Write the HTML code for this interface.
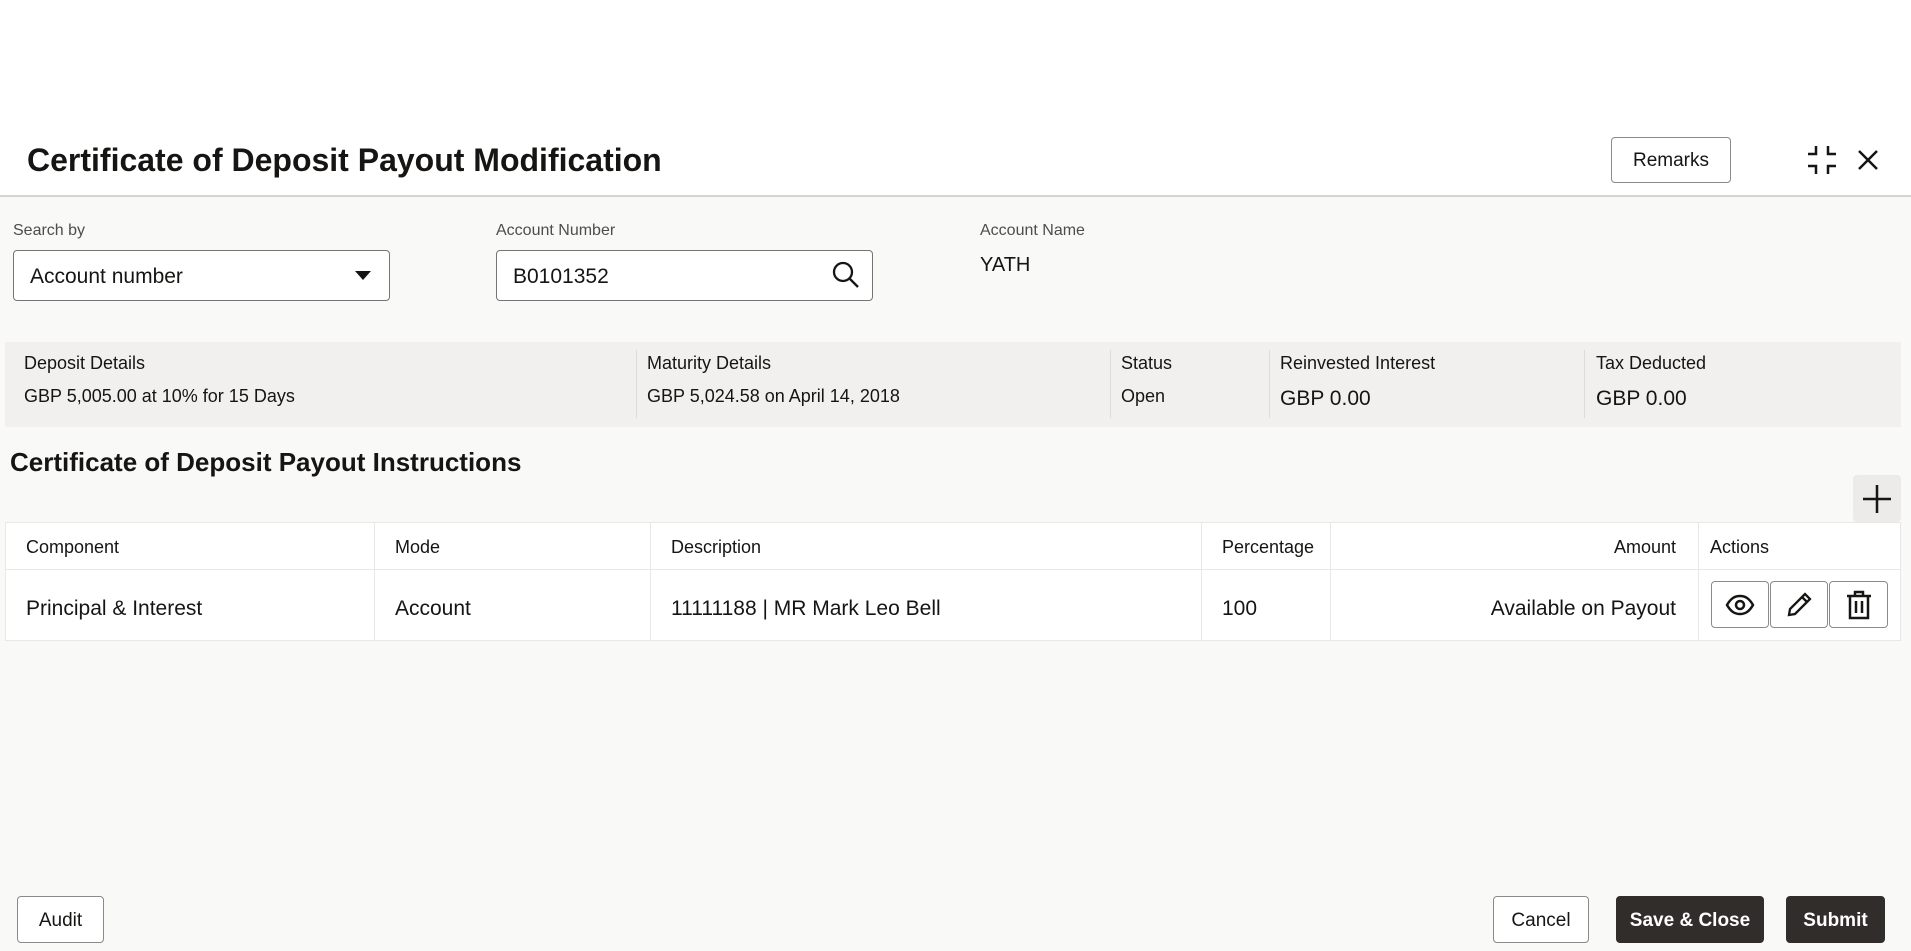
<!DOCTYPE html>
<html><head><meta charset="utf-8"><style>
*{box-sizing:border-box;margin:0;padding:0}
body{width:1911px;height:951px;overflow:hidden;background:#fff;font-family:"Liberation Sans",sans-serif;color:#161513;position:relative}
.abs{position:absolute}
.bg{left:0;top:196px;width:1911px;height:755px;background:#f9f9f8}
.btn{position:absolute;border:1px solid #8a8a8a;border-radius:4px;background:#fff;display:flex;align-items:center;justify-content:center;font-size:19px;color:#161513;padding-top:2px}
.dark{background:#312d2a;color:#fff;border-color:#312d2a;font-weight:bold}
.lbl{position:absolute;font-size:16px;color:#4f4d4b}
.inp{position:absolute;border:1px solid #757575;border-radius:4px;background:#fff;font-size:21px;padding-left:16px;padding-top:2px;display:flex;align-items:center}
.band{left:5px;top:342px;width:1896px;height:85px;background:#f1f0ee}
.bl{position:absolute;font-size:18px;color:#161513}
.bv{position:absolute;font-size:18px}
.vd{position:absolute;top:350px;height:68px;width:1px;background:#dcdbd9}
table{position:absolute;left:5px;top:522px;width:1896px;border-collapse:collapse;background:#fff;border:1px solid #e2e1df}
td{border:1px solid #e9e8e6;font-size:21px;padding:2px 0 0 20px}
tr.h td{height:47px;font-size:18px}
tr.r td{height:71px;padding-top:8px}
</style></head><body>
<div class="abs bg"></div>
<div class="abs" style="left:27px;top:142px;font-size:32px;font-weight:bold">Certificate of Deposit Payout Modification</div>
<div class="btn" style="left:1611px;top:137px;width:120px;height:46px">Remarks</div>
<svg class="abs" style="left:1806px;top:144px" width="32" height="32" viewBox="0 0 32 32" fill="none" stroke="#161513" stroke-width="2.5"><path d="M10 2v8H2M22 2v8h8M10 30v-8H2M22 30v-8h8"/></svg>
<svg class="abs" style="left:1857px;top:149px" width="22" height="22" viewBox="0 0 22 22" stroke="#161513" stroke-width="2.5"><path d="M2 2l18 18M20 2L2 20"/></svg>
<div class="abs" style="left:0;top:195px;width:1911px;height:2px;background:#d5d4d2"></div>

<div class="lbl" style="left:13px;top:222px">Search by</div>
<div class="inp" style="left:13px;top:250px;width:377px;height:51px">Account number</div>
<svg class="abs" style="left:355px;top:271px" width="16" height="10"><path d="M0 0h16L8 9z" fill="#161513"/></svg>
<div class="lbl" style="left:496px;top:222px">Account Number</div>
<div class="inp" style="left:496px;top:250px;width:377px;height:51px">B0101352</div>
<svg class="abs" style="left:832px;top:261px" width="28" height="28" viewBox="0 0 28 28" fill="none" stroke="#161513" stroke-width="2.3"><circle cx="11" cy="11" r="9"/><path d="M18 18l8 8"/></svg>
<div class="lbl" style="left:980px;top:222px">Account Name</div>
<div class="abs" style="left:980px;top:254px;font-size:20px">YATH</div>

<div class="abs band"></div>
<div class="vd" style="left:636px"></div><div class="vd" style="left:1110px"></div><div class="vd" style="left:1269px"></div><div class="vd" style="left:1584px"></div>
<div class="bl" style="left:24px;top:353px">Deposit Details</div><div class="bv" style="left:24px;top:386px">GBP 5,005.00 at 10% for 15 Days</div>
<div class="bl" style="left:647px;top:353px">Maturity Details</div><div class="bv" style="left:647px;top:386px">GBP 5,024.58 on April 14, 2018</div>
<div class="bl" style="left:1121px;top:353px">Status</div><div class="bv" style="left:1121px;top:386px">Open</div>
<div class="bl" style="left:1280px;top:353px">Reinvested Interest</div><div class="bv" style="left:1280px;top:387px;font-size:21px">GBP 0.00</div>
<div class="bl" style="left:1596px;top:353px">Tax Deducted</div><div class="bv" style="left:1596px;top:387px;font-size:21px">GBP 0.00</div>

<div class="abs" style="left:10px;top:447px;font-size:26px;font-weight:bold">Certificate of Deposit Payout Instructions</div>
<div class="abs" style="left:1853px;top:475px;width:48px;height:47px;background:#ecebe9;border-radius:4px"></div>
<svg class="abs" style="left:1862px;top:484px" width="30" height="30" stroke="#161513" stroke-width="2.5"><path d="M15 1v28M1 15h28"/></svg>

<table>
<tr class="h"><td style="width:369px">Component</td><td style="width:276px">Mode</td><td style="width:551px">Description</td><td style="width:129px">Percentage</td><td style="width:368px;text-align:right;padding-right:22px">Amount</td><td style="padding-left:11px">Actions</td></tr>
<tr class="r"><td>Principal &amp; Interest</td><td>Account</td><td>11111188 | MR Mark Leo Bell</td><td>100</td><td style="text-align:right;padding-right:22px">Available on Payout</td><td></td></tr>
</table>
<div class="btn" style="left:1711px;top:581px;width:58px;height:47px;padding:0"><svg width="30" height="22" viewBox="0 0 30 22" fill="none" stroke="#161513" stroke-width="2.5"><path d="M2 11C6 4 10 2 15 2s9 2 13 9c-4 7-8 9-13 9S6 18 2 11z"/><circle cx="15" cy="11" r="4"/></svg></div>
<div class="btn" style="left:1770px;top:581px;width:58px;height:47px;padding:0"><svg width="28" height="28" viewBox="0 0 28 28" fill="none" stroke="#161513" stroke-width="2.3"><path d="M4 24l1-6L20 3l5 5L10 23z M17 6l5 5"/></svg></div>
<div class="btn" style="left:1829px;top:581px;width:59px;height:47px;padding:0"><svg width="26" height="30" viewBox="0 0 26 30" fill="none" stroke="#161513" stroke-width="2.5"><path d="M1 6h24M9 6V2h8v4M4 6v22h18V6M10 11v12M16 11v12"/></svg></div>

<div class="btn" style="left:17px;top:896px;width:87px;height:47px">Audit</div>
<div class="btn" style="left:1493px;top:896px;width:96px;height:47px">Cancel</div>
<div class="btn dark" style="left:1616px;top:896px;width:148px;height:47px">Save &amp; Close</div>
<div class="btn dark" style="left:1786px;top:896px;width:99px;height:47px">Submit</div>
</body></html>
